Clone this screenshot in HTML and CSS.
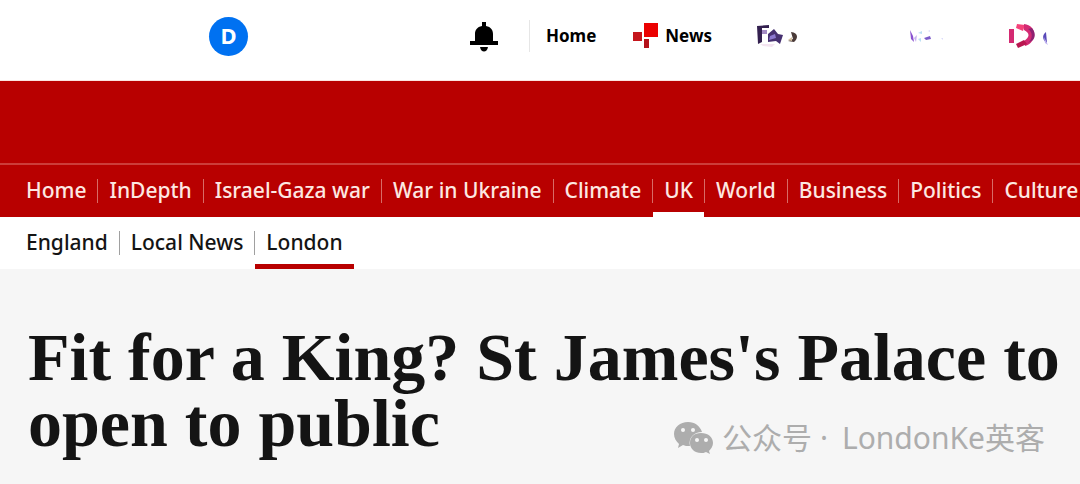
FILE: index.html
```
<!DOCTYPE html>
<html lang="en">
<head>
    <meta charset="UTF-8">
    <meta name="viewport" content="width=device-width, initial-scale=1.0">
    <title>Fit for a King? St James's Palace to open to public</title>
    <link rel="stylesheet" href="styles.css">
</head>
<body>
    <header class="topbar">
        <a class="account" href="#">D</a>
        <button class="bell" type="button" aria-label="Notifications">
            <svg width="28" height="30" viewBox="0 0 28 30">
                <path d="M12 0h4v4c5 1 7 4 7 8v7h5v4H0v-4h5v-7c0-4 2-7 7-8z"/>
                <path d="M10 25h8c-1 6-7 6-8 0z"/>
            </svg>
        </button>
        <nav class="services">
            <a class="service home" href="#">Home</a>
            <a class="service news" href="#">
                <svg width="26" height="26" viewBox="0 0 26 26">
                    <rect x="0" y="9" width="9" height="9" fill="#c4161c"/>
                    <rect x="11" y="0" width="14" height="14" fill="#eb0000"/>
                    <rect x="11" y="16" width="5" height="9" fill="#b5121b"/>
                </svg>
                News
            </a>
            <a class="service sport" href="#" aria-label="Sport">
                <svg width="44" height="26" viewBox="0 0 44 26">
                    <path d="M2 3l12-1v3H7v14l-4 2z" fill="#33204f"/>
                    <path d="M7 7h5v4H7z" fill="#a48bc4"/>
                    <path d="M13 11l6-5 4 5 5 1-3 9-4-3-8 1z" fill="#463070"/>
                    <path d="M15 13l5-2 1 4-7 2z" fill="#8c78cf"/>
                    <path d="M5 21h15l-3 3-9-1z" fill="#f4e4f1"/>
                    <path d="M36 9c8 1 7 7 3 10l-6-1 5-2z" fill="#4a3a38"/>
                    <path d="M33 17l4-3v4z" fill="#d8c3a2"/>
                </svg>
            </a>
            <a class="service weather" href="#" aria-label="Weather">
                <svg width="36" height="14" viewBox="0 0 36 14">
                    <path d="M1 1l3 6 1 6-3-3z" fill="#8a52d0"/>
                    <path d="M5 9l3-3-1 7z" fill="#c9b3ef"/>
                    <path d="M9 4l4-2v3zM9 10l3-1v4z" fill="#bce0f4"/>
                    <path d="M15 9l6-2 1 3-5 1z" fill="#7d5cc9"/>
                    <path d="M19 2l2-1v2zM32 9h2v2z" fill="#dcdcfa"/>
                </svg>
            </a>
            <a class="service iplayer" href="#" aria-label="iPlayer">
                <svg width="40" height="26" viewBox="0 0 40 26">
                    <path d="M0 6h5v14H0z" fill="#d42a72"/>
                    <path d="M8 1l8 1-2 6-7-3z" fill="#f5427a"/>
                    <path d="M15 1c7 1 10 5 10 10 0 6-3 10-9 12l-1-5c6-4 6-8 0-11z" fill="#d32a73"/>
                    <path d="M19 6c5 3 5 10 0 14l5-3c3-4 2-8-1-12z" fill="#8e2272"/>
                    <path d="M7 21l8-4 3 4-9 4z" fill="#b91650"/>
                    <path d="M37 9l1 11c-6-4-4-9-1-11z" fill="#5949b8"/>
                    <path d="M35 14l4 8-3-2z" fill="#c0b4f0"/>
                </svg>
            </a>
        </nav>
    </header>

    <div class="masthead">
        <div class="masthead-brand"></div>
        <nav class="nav nav-primary">
            <a href="#">Home</a>
            <a href="#">InDepth</a>
            <a href="#">Israel-Gaza war</a>
            <a href="#">War in Ukraine</a>
            <a href="#">Climate</a>
            <a class="active" href="#">UK</a>
            <a href="#">World</a>
            <a href="#">Business</a>
            <a href="#">Politics</a>
            <a href="#">Culture</a>
        </nav>
    </div>

    <nav class="nav nav-secondary">
        <a href="#">England</a>
        <a href="#">Local News</a>
        <a class="active" href="#">London</a>
    </nav>

    <main class="article">
        <h1>Fit for a King? St James's Palace to open to public</h1>
        <div class="watermark">
            <svg width="42" height="34" viewBox="0 0 42 34">
                <path d="M15 1C7 1 1 6 1 13c0 4 2 7 5 10l-1 4 5-3c2 1 4 1 6 1h1c-2-8 4-14 12-14C27 5 22 1 15 1z" fill="#adadad"/>
                <path d="M28 12c-7 0-11 4-11 10s5 10 11 10c2 0 3 0 5-1l4 2-1-3c2-2 4-5 4-8 0-6-5-10-12-10z" fill="#adadad"/>
                <g fill="#f6f6f6">
                    <circle cx="10" cy="9" r="2"/>
                    <circle cx="20" cy="9" r="2"/>
                    <circle cx="24" cy="19" r="2"/>
                    <circle cx="33" cy="19" r="2"/>
                </g>
            </svg>
            <span class="watermark-label">公众号 ·</span>
            <span>LondonKe英客</span>
        </div>
    </main>
</body>
</html>
```

FILE: styles.css
```
body {
    margin: 0;
    font-family: "Noto Sans", "Open Sans", sans-serif;
    background-color: #f6f6f6;
    color: #141414;
    overflow-x: hidden;
}

a {
    color: inherit;
    text-decoration: none;
}

svg {
    display: block;
    flex-shrink: 0;
}

.topbar {
    display: flex;
    align-items: center;
    height: 72px;
    padding-bottom: 8px;
    background-color: #fff;
    border-bottom: 1px solid #fbe3df;
}

.account {
    width: 39px;
    height: 39px;
    margin-left: 209px;
    border-radius: 50%;
    background-color: #0071f1;
    color: #fff;
    font-size: 22px;
    font-weight: 700;
    line-height: 36px;
    text-align: center;
}

.bell {
    margin-left: auto;
    padding: 2px 31px 0 0;
    border: 0;
    background: none;
}

.services {
    display: flex;
    align-items: center;
}

.service {
    display: flex;
    align-items: center;
    gap: 6px;
    color: #000;
    font-size: 17px;
    font-weight: 700;
    line-height: 32px;
}

.home {
    padding: 0 37px 0 16px;
    border-left: 1px solid #e6e6e6;
}

.sport {
    margin-left: 43px;
}

.weather {
    margin-left: 110px;
}

.iplayer {
    margin: 0 31px 0 64px;
}

.masthead {
    background-color: #b80000;
}

.masthead-brand {
    height: 82px;
    border-bottom: 2px solid #cc3d3a;
}

.nav {
    display: flex;
    align-items: center;
    height: 52px;
    padding-left: 15px;
    font-size: 21px;
    font-weight: 500;
    line-height: 22px;
    white-space: nowrap;
}

.nav a {
    position: relative;
    padding: 0 11px 2px;
}

.nav a + a {
    border-left: 1px solid #d86b66;
}

.nav .active::after {
    content: "";
    position: absolute;
    left: 0;
    right: 0;
    bottom: -14px;
    height: 5px;
    background-color: #fff;
}

.nav-primary {
    color: #fde8e2;
}

.nav-secondary {
    background-color: #fff;
}

.nav-secondary a + a {
    border-left-color: #a0a0a0;
}

.nav-secondary .active::after {
    background-color: #b80000;
}

.article {
    position: relative;
    padding: 55px 20px 24px 28px;
}

.article h1 {
    margin: 0;
    font-family: "Liberation Serif", serif;
    font-size: 68px;
    font-weight: 700;
    line-height: 66px;
}

.watermark {
    position: absolute;
    right: 35px;
    bottom: 24px;
    display: flex;
    align-items: center;
    color: #adadad;
    font-family: "Noto Sans", "Noto Sans CJK SC", sans-serif;
    font-size: 30px;
    line-height: 36px;
}

.watermark-label {
    margin: 0 14px 0 7px;
}
```
